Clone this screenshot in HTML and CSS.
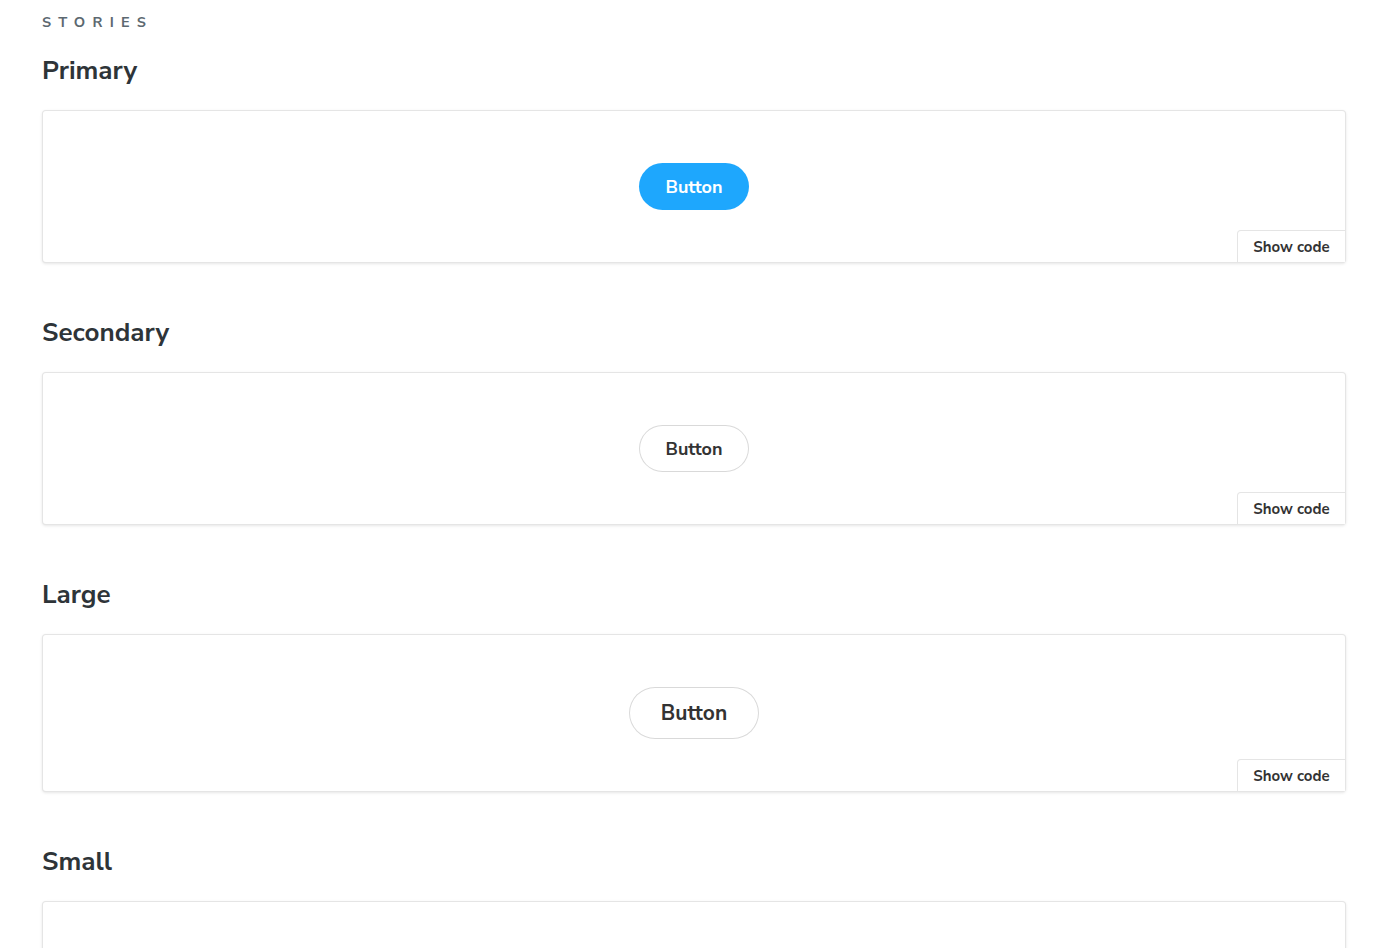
FILE: index.html
```html
<!DOCTYPE html>
<html>
<head>
<meta charset="utf-8">
<link rel="stylesheet" href="styles.css">
</head>
<body>
<main class="docs">
  <h2 class="stories-title">Stories</h2>

  <section class="story">
    <h3 class="story-name">Primary</h3>
    <div class="preview">
      <div class="canvas"><button class="btn btn-primary">Button</button></div>
      <button class="show-code">Show code</button>
    </div>
  </section>

  <section class="story">
    <h3 class="story-name">Secondary</h3>
    <div class="preview">
      <div class="canvas"><button class="btn btn-secondary">Button</button></div>
      <button class="show-code">Show code</button>
    </div>
  </section>

  <section class="story">
    <h3 class="story-name">Large</h3>
    <div class="preview">
      <div class="canvas"><button class="btn btn-secondary btn-large">Button</button></div>
      <button class="show-code">Show code</button>
    </div>
  </section>

  <section class="story">
    <h3 class="story-name">Small</h3>
    <div class="preview">
      <div class="canvas"><button class="btn btn-secondary btn-small">Button</button></div>
      <button class="show-code">Show code</button>
    </div>
  </section>
</main>
</body>
</html>
```

FILE: styles.css
```css
html, body {
  margin: 0;
  padding: 0;
  background: #ffffff;
}
body {
  font-family: "Nunito Sans", Lato, "Open Sans", "Liberation Sans", sans-serif;
  color: #333333;
  overflow: hidden;
}
.docs {
  padding: 13px 54px 0 42px;
}
.stories-title {
  margin: 0;
  font-size: 14.5px;
  line-height: 18px;
  font-weight: 700;
  letter-spacing: 0.5em;
  text-transform: uppercase;
  color: #5c6870;
}
.story-name {
  margin: 0;
  font-size: 26px;
  line-height: 32px;
  font-weight: 700;
  color: #2e3438;
}
.stories-title + .story .story-name {
  margin-top: 24px;
}
.story + .story .story-name {
  margin-top: 54px;
}
.preview {
  position: relative;
  margin-top: 23px;
  border: 1px solid rgba(0, 0, 0, 0.1);
  border-radius: 4px;
  box-shadow: rgba(0, 0, 0, 0.1) 0 1px 3px 0;
  background: #fff;
}
.canvas {
  display: flex;
  justify-content: center;
  align-items: center;
  padding: 52px 20px;
}
.btn {
  font-family: inherit;
  font-weight: 700;
  border-radius: 3em;
  cursor: pointer;
  display: inline-block;
  line-height: 1;
  border: 0;
}
.btn-primary {
  background: #1ea7fd;
  color: #ffffff;
  font-size: 18px;
  padding: 14px 26px;
  height: 47px;
  width: 110px;
}
.btn-secondary {
  background: transparent;
  color: #333333;
  box-shadow: rgba(0, 0, 0, 0.15) 0 0 0 1px inset;
  font-size: 18px;
  height: 47px;
  width: 110px;
}
.btn-large {
  font-size: 21px;
  height: 52px;
  width: 130px;
}
.btn-small {
  font-size: 14px;
  height: 38px;
  width: 90px;
}
.show-code {
  position: absolute;
  right: 0;
  bottom: 0;
  font-family: inherit;
  font-size: 15px;
  font-weight: 700;
  color: #333333;
  background: #ffffff;
  border: 1px solid rgba(0, 0, 0, 0.1);
  border-right: 0;
  border-bottom: 0;
  border-radius: 4px 0 0 0;
  padding: 0 14px;
  height: 32px;
  width: 108px;
  line-height: 30px;
}
```
